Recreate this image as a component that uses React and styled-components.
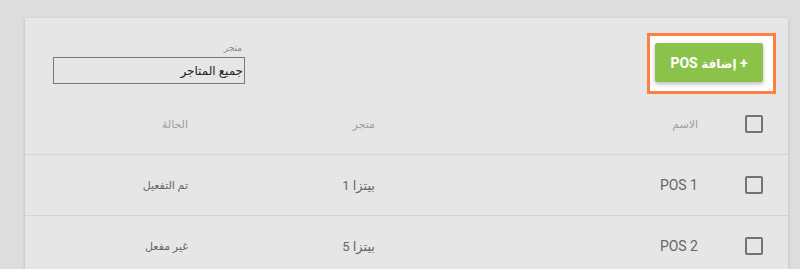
import React from "react";
import styled, { createGlobalStyle } from "styled-components";

const Global = createGlobalStyle`
  html, body { margin: 0; padding: 0; background: #dddddd; overflow: hidden; }
  body { font-family: Roboto, "DejaVu Sans", sans-serif; }
`;

const Page = styled.div`
  padding: 18px 12px 0 25px;
  height: 269px;
  box-sizing: border-box;
`;

const Card = styled.div`
  direction: rtl;
  background: #e6e6e6;
  box-shadow: 0 1px 3px rgba(0, 0, 0, 0.18);
  min-height: 300px;
`;

const Toolbar = styled.div`
  display: flex;
  justify-content: space-between;
  align-items: flex-start;
  height: 76px;
  box-sizing: border-box;
  padding: 15px 12px 0 28px;
`;

const Highlight = styled.div`
  border: 3px solid #ff7f3e;
  background: #ffffff;
  padding: 7px 10px 9px 5px;
`;

const AddButton = styled.button`
  width: 108px;
  height: 39px;
  border: none;
  border-radius: 2px;
  background: #8bc34a;
  color: #ffffff;
  font-family: Roboto, "DejaVu Sans", sans-serif;
  font-weight: 700;
  font-size: 14px;
  direction: rtl;
  box-shadow: 0 2px 4px rgba(0, 0, 0, 0.28);
  cursor: pointer;
  padding: 0;
`;

const ArabicWord = styled.span`
  font-size: 12px;
`;

const Filter = styled.div`
  display: flex;
  flex-direction: column;
  align-items: flex-start;
  padding-top: 9px;
`;

const FilterLabel = styled.label`
  font-size: 9px;
  color: #8a8a8a;
  margin-right: 3px;
  line-height: 12px;
`;

const Select = styled.select`
  appearance: none;
  -webkit-appearance: none;
  direction: rtl;
  width: 192px;
  height: 27px;
  margin-top: 3px;
  box-sizing: border-box;
  border: 1px solid #7a7a7a;
  border-radius: 0;
  background: transparent;
  color: #222;
  font-family: Roboto, "DejaVu Sans", sans-serif;
  font-size: 12px;
  padding: 0 1px;
  outline: none;
`;

const Row = styled.div`
  display: grid;
  grid-template-columns: 90px 323px 187px 1fr;
  align-items: center;
  height: 60px;
  border-bottom: 1px solid #d5d5d5;
  box-sizing: content-box;
`;

const Cell = styled.div`
  text-align: right;
  font-size: ${(p) => p.$size}px;
  color: ${(p) => (p.$head ? "#9e9e9e" : "#666666")};
  white-space: nowrap;
`;

const CheckCell = styled.div`
  display: flex;
  justify-content: flex-start;
  padding-right: 25px;
`;

const Check = styled.span`
  display: block;
  width: 18px;
  height: 18px;
  box-sizing: border-box;
  border: 2px solid #737373;
  border-radius: 2px;
`;

const rows = [
  { name: "POS 1", store: "بيتزا 1", status: "تم التفعيل" },
  { name: "POS 2", store: "بيتزا 5", status: "غير مفعل" },
];

export default function App() {
  return (
    <>
      <Global />
      <Page>
        <Card>
          <Toolbar>
            <Highlight>
              <AddButton>
                + <ArabicWord>إضافة</ArabicWord> POS
              </AddButton>
            </Highlight>
            <Filter>
              <FilterLabel>متجر</FilterLabel>
              <Select defaultValue="all">
                <option value="all">جميع المتاجر</option>
              </Select>
            </Filter>
          </Toolbar>
          <Row>
            <CheckCell><Check /></CheckCell>
            <Cell $head $size={11}>الاسم</Cell>
            <Cell $head $size={11}>متجر</Cell>
            <Cell $head $size={11}>الحالة</Cell>
          </Row>
          {rows.map((r) => (
            <Row key={r.name}>
              <CheckCell><Check /></CheckCell>
              <Cell $size={14}>{r.name}</Cell>
              <Cell $size={13}>{r.store}</Cell>
              <Cell $size={11}>{r.status}</Cell>
            </Row>
          ))}
        </Card>
      </Page>
    </>
  );
}
